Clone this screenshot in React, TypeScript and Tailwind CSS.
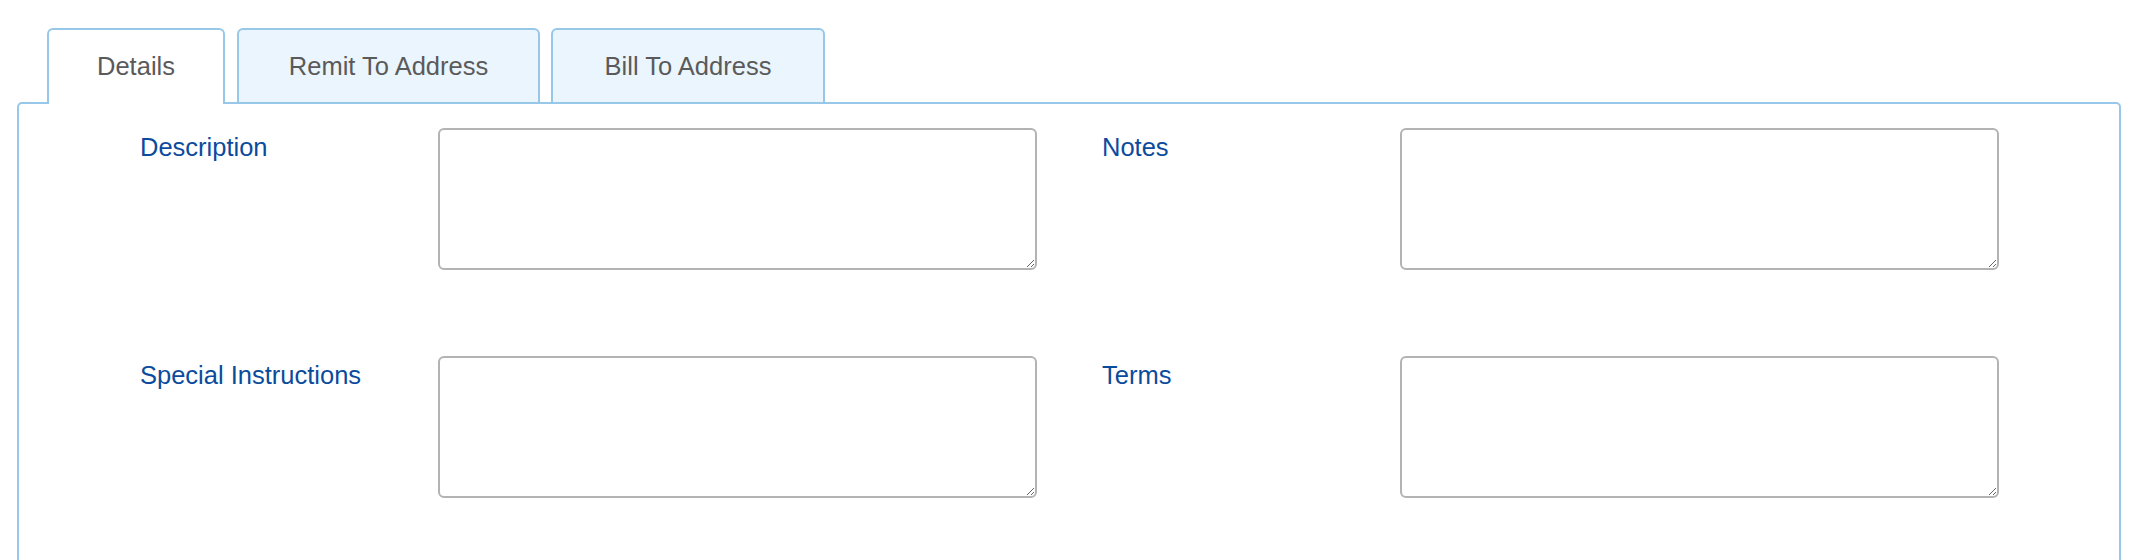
import React from "react";

const tabs = [
  { label: "Details", width: "w-[178px]", gap: "", active: true },
  { label: "Remit To Address", width: "w-[303px]", gap: "ml-[12px]", active: false },
  { label: "Bill To Address", width: "w-[274px]", gap: "ml-[11px]", active: false },
];

function Field({ label, labelWidth }: { label: string; labelWidth: string }) {
  return (
    <div className="flex">
      <label className={`${labelWidth} pt-[5px] text-[25.5px] leading-[29px] text-[#0b4b9d]`}>{label}</label>
      <textarea className="w-[599px] h-[142px] border-2 border-[#b3b3b3] rounded-[6px] bg-white outline-none" />
    </div>
  );
}

export default function App() {
  return (
    <div
      className="h-[560px] overflow-hidden bg-white pt-[28px] pl-[17px]"
      style={{ fontFamily: '"Liberation Sans", Arial, sans-serif' }}
    >
      <div className="relative z-10 flex ml-[30px]">
        {tabs.map((tab) => (
          <div
            key={tab.label}
            className={
              tab.active
                ? `${tab.width} ${tab.gap} h-[76px] -mb-[2px] pb-[2px] flex items-center justify-center border-2 border-b-0 border-[#97c8e9] rounded-t-[6px] bg-white text-[25.5px] text-[#5a5a5a]`
                : `${tab.width} ${tab.gap} h-[76px] -mb-[2px] flex items-center justify-center border-2 border-[#97c8e9] rounded-t-[6px] bg-[#eaf5fe] text-[25.5px] text-[#5a5a5a]`
            }
          >
            {tab.label}
          </div>
        ))}
      </div>
      <div className="w-[2104px] h-[480px] border-2 border-[#97c8e9] rounded-[5px] pt-[24px] pl-[121px]">
        <div className="flex flex-col gap-[86px]">
          <div className="flex gap-[65px]">
            <Field label="Description" labelWidth="w-[298px]" />
            <Field label="Notes" labelWidth="w-[298px]" />
          </div>
          <div className="flex gap-[65px]">
            <Field label="Special Instructions" labelWidth="w-[298px]" />
            <Field label="Terms" labelWidth="w-[298px]" />
          </div>
        </div>
      </div>
    </div>
  );
}
